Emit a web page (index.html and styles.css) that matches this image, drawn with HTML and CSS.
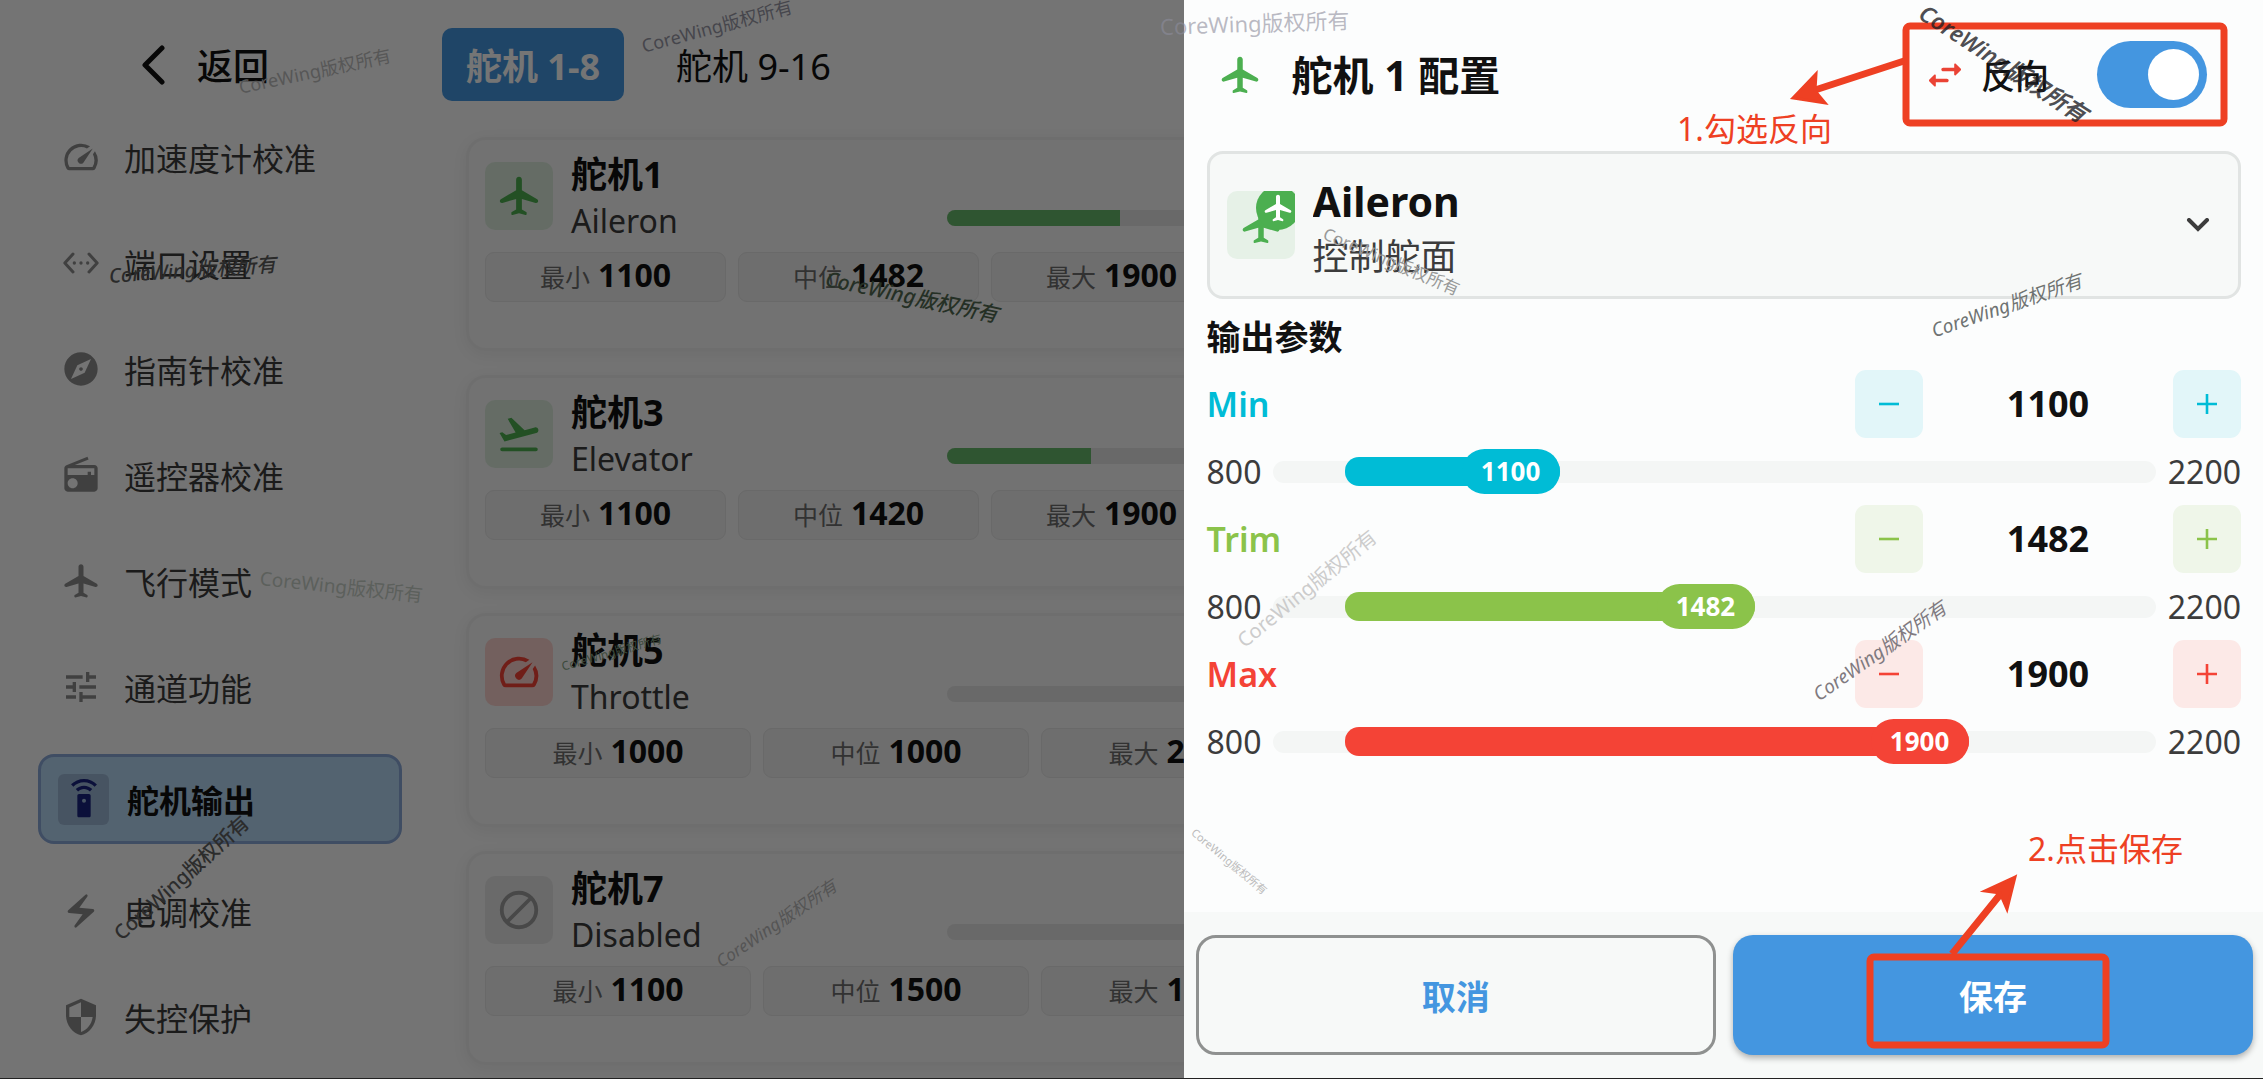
FILE: index.html
```html
<!DOCTYPE html>
<html lang="zh-CN">
<head>
    <meta charset="UTF-8">
    <meta name="viewport" content="width=device-width, initial-scale=1.0">
    <link rel="stylesheet" href="styles.css">
    <title>舵机输出</title>
</head>
<body>
    <!-- Icon set -->
    <svg class="icon-defs" aria-hidden="true">
        <symbol id="i-plane" viewBox="0 0 24 24"><path d="M21.48 13.7 13.5 9V3.5c0-.83-.67-1.5-1.5-1.5s-1.5.67-1.5 1.5V9l-7.98 4.7c-.32.18-.52.53-.52.9 0 .7.67 1.2 1.34 1.01l7.16-2.1V19l-2.26 1.35c-.15.09-.24.26-.24.43v.58c0 .33.31.57.62.49L12 21l3.37.85c.32.08.62-.16.62-.49v-.58c0-.18-.09-.34-.24-.43L13.5 19v-5.5l7.16 2.1c.67.2 1.34-.3 1.34-1 0-.37-.2-.72-.52-.9z"/></symbol>
        <symbol id="i-speed" viewBox="0 0 24 24"><path d="M20.38 8.57l-1.23 1.85a8 8 0 0 1-.22 7.58H5.07A8 8 0 0 1 15.58 6.85l1.85-1.23A10 10 0 0 0 3.35 19a2 2 0 0 0 1.72 1h13.85a2 2 0 0 0 1.74-1 10 10 0 0 0-.27-10.44zm-9.79 6.84a2 2 0 0 0 2.83 0l5.66-8.49-8.49 5.66a2 2 0 0 0 0 2.83z"/></symbol>
        <symbol id="i-port" viewBox="0 0 24 24"><path d="M7.2 6.6 2.3 12l4.9 5.4M16.8 6.6l4.9 5.4-4.9 5.4" fill="none" stroke="currentColor" stroke-width="1.8" stroke-linecap="round" stroke-linejoin="round"/><circle cx="8" cy="12" r="1"/><circle cx="12" cy="12" r="1"/><circle cx="16" cy="12" r="1"/></symbol>
        <symbol id="i-compass" viewBox="0 0 24 24"><path d="M12 10.9c-.61 0-1.1.49-1.1 1.1s.49 1.1 1.1 1.1c.61 0 1.1-.49 1.1-1.1s-.49-1.1-1.1-1.1zM12 2C6.48 2 2 6.48 2 12s4.48 10 10 10 10-4.48 10-10S17.52 2 12 2zm2.19 12.19L6 18l3.81-8.19L18 6l-3.81 8.19z"/></symbol>
        <symbol id="i-radio" viewBox="0 0 24 24"><path d="M3.24 6.15C2.51 6.43 2 7.17 2 8v12c0 1.1.89 2 2 2h16c1.11 0 2-.9 2-2V8c0-1.11-.89-2-2-2H8.3l8.26-3.34L15.88 1 3.24 6.15zM7 20c-1.66 0-3-1.34-3-3s1.34-3 3-3 3 1.34 3 3-1.34 3-3 3zm13-8h-2v-2h-2v2H4V8h16v4z"/></symbol>
        <symbol id="i-tune" viewBox="0 0 24 24"><path d="M3 17v2h6v-2H3zM3 5v2h10V5H3zm10 16v-2h8v-2h-8v-2h-2v6h2zM7 9v2H3v2h4v2h2V9H7zm14 4v-2H11v2h10zm-6-4h2V7h4V5h-4V3h-2v6z"/></symbol>
        <symbol id="i-remote" viewBox="0 0 24 24"><path d="M15 9H9c-.55 0-1 .45-1 1v12c0 .55.45 1 1 1h6c.55 0 1-.45 1-1V10c0-.55-.45-1-1-1zm-3 5.2a1.2 1.2 0 1 1 0-2.4 1.2 1.2 0 0 1 0 2.4zM7.05 6.05l1.41 1.41C9.37 6.56 10.62 6 12 6s2.63.56 3.54 1.46l1.41-1.41C15.68 4.78 13.93 4 12 4s-3.68.78-4.95 2.05zM12 0C8.96 0 6.21 1.23 4.22 3.22l1.41 1.41C7.26 3.01 9.51 2 12 2s4.74 1.01 6.36 2.64l1.41-1.41C17.79 1.23 15.04 0 12 0z"/></symbol>
        <symbol id="i-bolt" viewBox="0 0 24 24"><path d="M14.69 2.21 4.33 11.49c-.64.58-.28 1.65.58 1.73L13 14l-4.85 6.76c-.22.31-.19.74.08 1.01.3.3.77.31 1.08.02l10.36-9.28c.64-.58.28-1.65-.58-1.73L11 10l4.85-6.76c.22-.31.19-.74-.08-1.01a.77.77 0 0 0-1.08-.02z"/></symbol>
        <symbol id="i-shield" viewBox="0 0 24 24"><path d="M12 1 3 5v6c0 5.55 3.84 10.74 9 12 5.16-1.26 9-6.45 9-12V5l-9-4zm0 10.99h7c-.53 4.12-3.28 7.79-7 8.94V12H5V6.3l7-3.11v8.8z"/></symbol>
        <symbol id="i-takeoff" viewBox="0 0 24 24"><path d="M3.2 19h17.6a1 1 0 0 1 0 2H3.2a1 1 0 0 1 0-2zm18.87-9.36c-.21-.8-1.04-1.28-1.84-1.06L14.92 10l-6.9-6.43-1.93.51 4.14 7.17-4.97 1.33-1.97-1.54-1.45.39 2.59 4.49L21 11.49c.81-.23 1.28-1.05 1.07-1.85z"/></symbol>
        <symbol id="i-off" viewBox="0 0 24 24"><path d="M12 3a9 9 0 1 0 0 18 9 9 0 0 0 0-18zM5.6 18.4 18.4 5.6" fill="none" stroke="currentColor" stroke-width="2"/></symbol>
        <symbol id="i-swap" viewBox="0 0 24 24"><path d="M6.14 11.86l-2.78 2.79c-.19.2-.19.51 0 .71l2.78 2.79c.31.32.85.09.85-.35V16H13c.55 0 1-.45 1-1s-.45-1-1-1H6.99v-1.79c0-.45-.54-.67-.85-.35zm14.51-3.21l-2.78-2.79c-.31-.32-.85-.09-.85.35V8H11c-.55 0-1 .45-1 1s.45 1 1 1h6.01v1.79c0 .45.54.67.85.35l2.78-2.79c.2-.19.2-.51.01-.7z"/></symbol>
        <symbol id="i-minus" viewBox="0 0 20 20"><path d="M0 10h20" fill="none" stroke="currentColor" stroke-width="2.6"/></symbol>
        <symbol id="i-plus" viewBox="0 0 20 20"><path d="M0 10h20M10 0v20" fill="none" stroke="currentColor" stroke-width="2.6"/></symbol>
    </svg>

    <div class="app">
        <aside class="sidebar">
            <button type="button" class="back">
                <svg viewBox="0 0 24 40"><path d="M21 3 4 20l17 17" fill="none" stroke="currentColor" stroke-width="5" stroke-linecap="round" stroke-linejoin="round"/></svg>
                返回
            </button>
            <nav class="menu">
                <a href="#accel" class="menu-item"><span class="menu-icon"><svg><use href="#i-speed"/></svg></span>加速度计校准</a>
                <a href="#port" class="menu-item"><span class="menu-icon"><svg><use href="#i-port"/></svg></span>端口设置</a>
                <a href="#compass" class="menu-item"><span class="menu-icon"><svg><use href="#i-compass"/></svg></span>指南针校准</a>
                <a href="#radio" class="menu-item"><span class="menu-icon"><svg><use href="#i-radio"/></svg></span>遥控器校准</a>
                <a href="#mode" class="menu-item"><span class="menu-icon"><svg><use href="#i-plane"/></svg></span>飞行模式</a>
                <a href="#channel" class="menu-item"><span class="menu-icon"><svg><use href="#i-tune"/></svg></span>通道功能</a>
                <a href="#servo" class="menu-item active"><span class="menu-icon"><svg><use href="#i-remote"/></svg></span>舵机输出</a>
                <a href="#esc" class="menu-item"><span class="menu-icon"><svg><use href="#i-bolt"/></svg></span>电调校准</a>
                <a href="#failsafe" class="menu-item"><span class="menu-icon"><svg><use href="#i-shield"/></svg></span>失控保护</a>
            </nav>
        </aside>

        <main class="content">
            <div class="tabs">
                <button type="button" class="tab active">舵机 1-8</button>
                <button type="button" class="tab">舵机 9-16</button>
            </div>

            <div class="cards">
                <section class="card">
                    <div class="card-top">
                        <span class="card-icon green"><svg><use href="#i-plane"/></svg></span>
                        <div class="card-names">
                            <h2>舵机1</h2>
                            <p>Aileron</p>
                        </div>
                        <div class="bar"><div class="bar-fill" style="width: 48%"></div></div>
                    </div>
                    <div class="chips reversed">
                        <div class="chip">最小 <b>1100</b></div>
                        <div class="chip">中位 <b>1482</b></div>
                        <div class="chip">最大 <b>1900</b></div>
                    </div>
                </section>

                <section class="card">
                    <div class="card-top">
                        <span class="card-icon green"><svg><use href="#i-takeoff"/></svg></span>
                        <div class="card-names">
                            <h2>舵机3</h2>
                            <p>Elevator</p>
                        </div>
                        <div class="bar"><div class="bar-fill" style="width: 40%"></div></div>
                    </div>
                    <div class="chips reversed">
                        <div class="chip">最小 <b>1100</b></div>
                        <div class="chip">中位 <b>1420</b></div>
                        <div class="chip">最大 <b>1900</b></div>
                    </div>
                </section>

                <section class="card">
                    <div class="card-top">
                        <span class="card-icon red"><svg><use href="#i-speed"/></svg></span>
                        <div class="card-names">
                            <h2>舵机5</h2>
                            <p>Throttle</p>
                        </div>
                        <div class="bar"></div>
                    </div>
                    <div class="chips">
                        <div class="chip">最小 <b>1000</b></div>
                        <div class="chip">中位 <b>1000</b></div>
                        <div class="chip">最大 <b>2000</b></div>
                    </div>
                </section>

                <section class="card">
                    <div class="card-top">
                        <span class="card-icon grey"><svg><use href="#i-off"/></svg></span>
                        <div class="card-names">
                            <h2>舵机7</h2>
                            <p>Disabled</p>
                        </div>
                        <div class="bar"></div>
                    </div>
                    <div class="chips">
                        <div class="chip">最小 <b>1100</b></div>
                        <div class="chip">中位 <b>1500</b></div>
                        <div class="chip">最大 <b>1900</b></div>
                    </div>
                </section>
            </div>
        </main>
    </div>

    <div class="scrim"></div>

    <!-- Servo config drawer -->
    <div class="drawer" role="dialog" aria-labelledby="drawer-title">
        <header class="drawer-head">
            <svg class="head-icon"><use href="#i-plane"/></svg>
            <h1 id="drawer-title">舵机 1 配置</h1>
            <svg class="swap-icon"><use href="#i-swap"/></svg>
            <label for="reverse">反向</label>
            <input type="checkbox" class="switch" id="reverse" checked>
        </header>

        <div class="drawer-body">
            <div class="function-box">
                <span class="function-icon">
                    <svg class="function-plane"><use href="#i-plane"/></svg>
                    <span class="function-badge"><svg><use href="#i-plane"/></svg></span>
                </span>
                <div class="function-text">
                    <select id="function">
                        <option selected>Aileron</option>
                    </select>
                    <label for="function">控制舵面</label>
                </div>
                <svg class="chevron" viewBox="0 0 24 14"><path d="m3 2 9 9 9-9" fill="none" stroke="currentColor" stroke-width="4" stroke-linecap="round"/></svg>
            </div>

            <h2 class="section-title">输出参数</h2>

            <div class="param min">
                <div class="param-head">
                    <label for="min">Min</label>
                    <button type="button" class="step" aria-label="Min -"><svg><use href="#i-minus"/></svg></button>
                    <span class="param-value">1100</span>
                    <button type="button" class="step" aria-label="Min +"><svg><use href="#i-plus"/></svg></button>
                </div>
                <div class="param-range">
                    <span>800</span>
                    <div class="track">
                        <div class="track-fill" style="width: 29%"><output for="min">1100</output></div>
                        <input type="range" id="min" min="800" max="2200" value="1100">
                    </div>
                    <span>2200</span>
                </div>
            </div>

            <div class="param trim">
                <div class="param-head">
                    <label for="trim">Trim</label>
                    <button type="button" class="step" aria-label="Trim -"><svg><use href="#i-minus"/></svg></button>
                    <span class="param-value">1482</span>
                    <button type="button" class="step" aria-label="Trim +"><svg><use href="#i-plus"/></svg></button>
                </div>
                <div class="param-range">
                    <span>800</span>
                    <div class="track">
                        <div class="track-fill" style="width: 55.4%"><output for="trim">1482</output></div>
                        <input type="range" id="trim" min="800" max="2200" value="1482">
                    </div>
                    <span>2200</span>
                </div>
            </div>

            <div class="param max">
                <div class="param-head">
                    <label for="max">Max</label>
                    <button type="button" class="step" aria-label="Max -"><svg><use href="#i-minus"/></svg></button>
                    <span class="param-value">1900</span>
                    <button type="button" class="step" aria-label="Max +"><svg><use href="#i-plus"/></svg></button>
                </div>
                <div class="param-range">
                    <span>800</span>
                    <div class="track">
                        <div class="track-fill" style="width: 84.4%"><output for="max">1900</output></div>
                        <input type="range" id="max" min="800" max="2200" value="1900">
                    </div>
                    <span>2200</span>
                </div>
            </div>
        </div>

        <footer class="drawer-foot">
            <button type="button" class="btn cancel">取消</button>
            <button type="button" class="btn save">保存</button>
        </footer>
    </div>

    <!-- Tutorial marks on top of the page -->
    <div class="marks">
        <svg class="arrows" viewBox="0 0 2263 1079">
            <rect x="1906" y="26" width="318" height="97" rx="4"/>
            <rect x="1870" y="957" width="236" height="88" rx="4"/>
            <path d="M1904 61 1812 91M1952 954l51-63"/>
            <path class="tip" d="M1793 98l23-24-1 17 10 12zM2015 877l-30 14 15 2 7 16z"/>
        </svg>
        <span class="note note-1">1.勾选反向</span>
        <span class="note note-2">2.点击保存</span>

        <span class="wm wm-1">CoreWing版权所有</span>
        <span class="wm wm-2">CoreWing版权所有</span>
        <span class="wm wm-3">CoreWing版权所有</span>
        <span class="wm wm-4">CoreWing版权所有</span>
        <span class="wm wm-5">CoreWing版权所有</span>
        <span class="wm wm-6">CoreWing版权所有</span>
        <span class="wm wm-7">CoreWing版权所有</span>
        <span class="wm wm-8">CoreWing版权所有</span>
        <span class="wm wm-9">CoreWing版权所有</span>
        <span class="wm wm-10">CoreWing版权所有</span>
        <span class="wm wm-11">CoreWing版权所有</span>
        <span class="wm wm-12">CoreWing版权所有</span>
        <span class="wm wm-13">CoreWing版权所有</span>
        <span class="wm wm-14">CoreWing版权所有</span>
        <span class="wm wm-15">CoreWing版权所有</span>
    </div>
</body>
</html>
```
FILE: styles.css
```css
* {
    box-sizing: border-box;
}

body {
    position: relative;
    height: 100vh;
    margin: 0;
    overflow: hidden;
    border-bottom: 1px solid #222;
    background-color: #fcfcfc;
    color: #111;
    font-family: "Noto Sans", "Noto Sans CJK SC", sans-serif;
    font-size: 32px;
}

h1, h2, p {
    margin: 0;
}

button, select, input {
    font-family: inherit;
    color: inherit;
}

button {
    padding: 0;
    border: none;
    background: none;
    cursor: pointer;
}

svg {
    fill: currentColor;
    flex: none;
}

.icon-defs {
    position: absolute;
    width: 0;
    height: 0;
}

.app {
    display: flex;
    height: 100%;
}

/* Sidebar */
.sidebar {
    flex: 0 0 442px;
    padding: 0 40px 0 38px;
}

.back {
    display: flex;
    align-items: center;
    gap: 32px;
    height: 85px;
    margin: 22px 0 6px 103px;
    font-size: 36px;
    font-weight: 500;
}

.back svg {
    width: 24px;
    height: 40px;
}

.menu {
    display: flex;
    flex-direction: column;
    gap: 18px;
}

.menu-item {
    display: flex;
    align-items: center;
    gap: 18px;
    height: 88px;
    padding: 0 17px;
    color: #3c3c3c;
    text-decoration: none;
}

.menu-icon {
    display: flex;
    align-items: center;
    justify-content: center;
    width: 51px;
    height: 51px;
    border-radius: 6px;
    color: #8d8d8d;
}

.menu-icon svg {
    width: 40px;
    height: 40px;
}

.menu-item.active {
    height: 90px;
    margin: 5px 0;
    border: 3px solid #8aa8d8;
    border-radius: 16px;
    background-color: #b6d8f4;
    color: #111;
    font-weight: bold;
}

.menu-item.active .menu-icon {
    background-color: #9cb8d6;
    color: #1a237e;
}

/* Servo list */
.content {
    flex: 1;
    min-width: 0;
    padding: 28px 53px 0 0;
}

.tabs {
    display: flex;
    gap: 28px;
}

.tab {
    height: 73px;
    padding: 0 24px;
    border-radius: 10px;
    font-size: 36px;
}

.tab.active {
    background-color: #4496e0;
    color: #fff;
    font-weight: bold;
}

.cards {
    display: grid;
    grid-template-columns: 1fr 1fr;
    gap: 24px;
    padding: 36px 0 0 24px;
}

.card {
    grid-column: 1;
    height: 214px;
    padding: 10px 16px;
    border: 3px solid #f0f0f0;
    border-radius: 20px;
    background-color: #f8f8f8;
    box-shadow: 0 4px 16px rgba(0, 0, 0, 0.06);
}

.card-top {
    display: flex;
    align-items: center;
    gap: 18px;
    margin-bottom: 10px;
}

.card-icon {
    display: flex;
    align-items: center;
    justify-content: center;
    width: 68px;
    height: 68px;
    border-radius: 10px;
}

.card-icon svg {
    width: 46px;
    height: 46px;
}

.card-icon.green {
    background-color: #dcecdd;
    color: #4caf50;
}

.card-icon.red {
    background-color: #fad2ce;
    color: #f44336;
}

.card-icon.grey {
    background-color: #e8e8e8;
    color: #9e9e9e;
}

.card-names {
    flex: 1;
}

.card-names h2 {
    font-size: 36px;
    line-height: 50px;
}

.card-names p {
    color: #3c3c3c;
    line-height: 42px;
}

.bar {
    align-self: flex-end;
    width: 360px;
    height: 16px;
    margin-bottom: 16px;
    overflow: hidden;
    border-radius: 8px;
    background-color: #e4e4e4;
}

.bar-fill {
    height: 100%;
    background-color: #68b96b;
}

.chips {
    display: flex;
    gap: 12px;
}

.chips.reversed {
    padding-right: 75px;
}

.chip {
    flex: 1;
    display: flex;
    align-items: baseline;
    justify-content: center;
    gap: 8px;
    height: 50px;
    border: 1px solid #e4e4e4;
    border-radius: 9px;
    background-color: #f0f0f0;
    color: #6d6d6d;
    font-size: 25px;
    line-height: 44px;
}

.chip b {
    color: #111;
    font-size: 32px;
}

.scrim {
    position: absolute;
    inset: 0;
    background-color: rgba(0, 0, 0, 0.54);
}

/* Drawer */
.drawer {
    position: absolute;
    top: 0;
    right: 0;
    bottom: 0;
    display: flex;
    flex-direction: column;
    width: 47.7%;
    background-color: #fcfdfd;
}

.drawer-head {
    display: flex;
    align-items: center;
    padding: 41px 56px 43px 34px;
}

.drawer-head h1 {
    flex: 1;
    margin-left: 30px;
    font-size: 41px;
    line-height: 60px;
}

.drawer-head label {
    margin: 0 48px 0 14px;
    font-size: 34px;
    font-weight: 500;
}

.head-icon, .swap-icon {
    width: 44px;
    height: 44px;
}

.head-icon {
    color: #4caf50;
}

.swap-icon {
    color: #ea4335;
}

.switch {
    appearance: none;
    display: flex;
    align-items: center;
    width: 110px;
    height: 67px;
    margin: 0;
    padding: 8px;
    border-radius: 34px;
    background-color: #ccc;
}

.switch::before {
    content: "";
    width: 51px;
    height: 51px;
    border-radius: 50%;
    background-color: #fff;
}

.switch:checked {
    justify-content: flex-end;
    background-color: #4496e0;
}

.drawer-body {
    flex: 1;
    padding: 0 22px 0 23px;
}

.function-box {
    display: flex;
    align-items: center;
    height: 148px;
    padding: 0 28px 0 17px;
    border: 3px solid #e1e4e3;
    border-radius: 16px;
    background-color: #f7f9f8;
}

.function-icon {
    position: relative;
    display: flex;
    align-items: center;
    justify-content: center;
    width: 68px;
    height: 68px;
    margin-right: 18px;
    overflow: hidden;
    border-radius: 10px 0 10px 10px;
    background-color: #e6f1e7;
    color: #4caf50;
}

.function-plane {
    width: 44px;
    height: 44px;
}

.function-badge {
    position: absolute;
    top: -5px;
    right: -5px;
    display: flex;
    align-items: center;
    justify-content: center;
    width: 44px;
    height: 44px;
    border-radius: 50%;
    background-color: #4caf50;
    color: #fff;
}

.function-badge svg {
    width: 32px;
    height: 32px;
}

.function-text {
    flex: 1;
    display: flex;
    flex-direction: column;
    padding-top: 8px;
}

.function-text select {
    appearance: none;
    height: 56px;
    padding: 0;
    border: none;
    background: none;
    font-size: 41px;
    font-weight: bold;
}

.function-text label {
    color: #3c3c3c;
    font-size: 36px;
    line-height: 56px;
}

.chevron {
    width: 24px;
    height: 14px;
    color: #3c3c3c;
}

.section-title {
    padding-top: 6px;
    font-size: 34px;
    line-height: 65px;
}

.param {
    display: flex;
    flex-direction: column;
    gap: 11px;
    margin-bottom: 11px;
}

.param-head {
    display: flex;
    align-items: center;
}

.param-head label {
    flex: 1;
    color: var(--tone);
    font-size: 34px;
    font-weight: 600;
}

.param-value {
    width: 250px;
    font-size: 36px;
    font-weight: bold;
    line-height: 68px;
    text-align: center;
}

.step {
    display: flex;
    align-items: center;
    justify-content: center;
    width: 68px;
    height: 68px;
    border-radius: 11px;
    background-color: var(--soft);
    color: var(--tone);
}

.step svg {
    width: 20px;
    height: 20px;
}

.param-range {
    display: flex;
    align-items: center;
    gap: 12px;
    height: 45px;
    color: #3c3c3c;
}

.track {
    position: relative;
    flex: 1;
    display: flex;
    align-items: center;
    height: 22px;
    padding: 0 72px;
    border-radius: 11px;
    background-color: #f4f6f5;
}

.track-fill {
    display: flex;
    align-items: center;
    justify-content: flex-end;
    height: 29px;
    border-radius: 14px;
    background-color: var(--tone);
}

.track-fill output {
    width: 98px;
    border-radius: 23px;
    background-color: var(--tone);
    color: #fff;
    font-size: 26px;
    font-weight: bold;
    line-height: 45px;
    text-align: center;
}

/* the native slider lies over the drawn one */
.track input {
    position: absolute;
    inset: 0;
    width: 100%;
    margin: 0;
    opacity: 0;
}

.min {
    --tone: #00bcd6;
    --soft: #e2f6f9;
}

.trim {
    --tone: #8bc34a;
    --soft: #eff6e9;
}

.max {
    --tone: #f44336;
    --soft: #fce9e7;
}

.drawer-foot {
    display: grid;
    grid-template-columns: 1fr 1fr;
    gap: 17px;
    padding: 23px 10px 23px 12px;
    background-color: #f7f9f8;
}

.btn {
    height: 120px;
    border-radius: 20px;
    font-size: 34px;
    font-weight: bold;
}

.cancel {
    border: 3px solid #8f9190;
    color: #4496e0;
}

.save {
    background-color: #4496e0;
    box-shadow: 0 3px 6px rgba(0, 0, 0, 0.3);
    color: #fff;
}

/* Marks */
.marks {
    position: absolute;
    inset: 0;
    overflow: hidden;
    pointer-events: none;
}

.arrows {
    display: block;
    width: 100%;
    fill: none;
    stroke: #ee4023;
    stroke-width: 7;
}

.arrows .tip {
    fill: #ee4023;
    stroke-width: 3;
}

.note {
    position: absolute;
    color: #ee4023;
    line-height: 40px;
}

.note-1 { left: 1677px; top: 109px; }
.note-2 { left: 2028px; top: 829px; }

.wm {
    position: absolute;
    line-height: 24px;
    white-space: nowrap;
    transform-origin: 0 50%;
}

.wm-1 { left: 239px; top: 75px; font-size: 18px; color: #575757; transform: rotate(-12deg); }
.wm-2 { left: 109px; top: 264px; font-size: 20px; font-style: italic; font-weight: 500; color: #2a2a2a; transform: rotate(-4deg); }
.wm-3 { left: 260px; top: 566px; font-size: 19px; color: #5c605c; transform: rotate(6deg); }
.wm-4 { left: 117px; top: 924px; font-size: 20px; font-weight: 500; color: #2c2c2c; transform: rotate(-42deg); }
.wm-5 { left: 642px; top: 34px; font-size: 18px; color: #46464c; transform: rotate(-15deg); }
.wm-6 { left: 826px; top: 266px; font-size: 21px; font-style: italic; font-weight: 500; color: #253025; transform: rotate(12deg); }
.wm-7 { left: 562px; top: 655px; font-size: 12px; color: #3c4a3c; transform: rotate(-16deg); }
.wm-8 { left: 718px; top: 951px; font-size: 17px; font-style: italic; color: #555; transform: rotate(-34deg); }
.wm-9 { left: 1160px; top: 14px; font-size: 22px; color: rgba(140, 140, 155, 0.6); transform: rotate(-2deg); }
.wm-10 { left: 1324px; top: 221px; font-size: 17px; color: #999; transform: rotate(23deg); }
.wm-11 { left: 1922px; top: -2px; font-size: 23px; font-style: italic; font-weight: 600; color: rgba(30, 30, 36, 0.8); transform: rotate(33deg); }
.wm-12 { left: 1932px; top: 319px; font-size: 19px; font-style: italic; color: #6f7372; transform: rotate(-19deg); }
.wm-13 { left: 1240px; top: 631px; font-size: 20px; color: #ccc; transform: rotate(-39deg); }
.wm-14 { left: 1815px; top: 684px; font-size: 19px; font-style: italic; color: #807a80; transform: rotate(-35deg); }
.wm-15 { left: 1193px; top: 819px; font-size: 11px; color: #bbb; transform: rotate(40deg); }
```
